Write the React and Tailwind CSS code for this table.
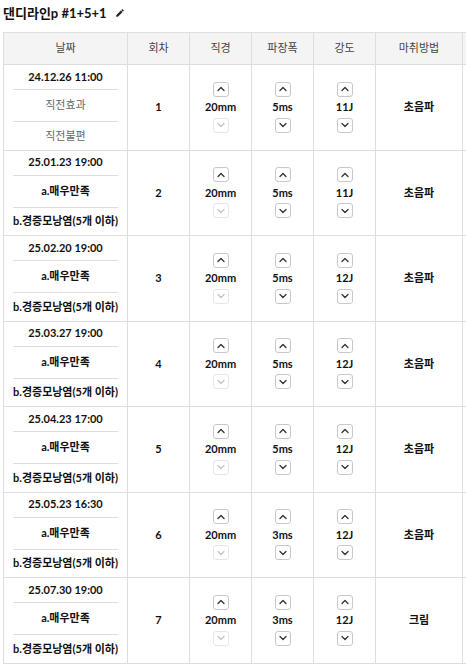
const ROWS = [
  { date: '24.12.26 11:00', a: '직전효과', b: '직전불편', muted: true, no: 1, size: '20mm', pulse: '5ms', power: '11J', method: '초음파' },
  { date: '25.01.23 19:00', a: 'a.매우만족', b: 'b.경증모낭염(5개 이하)', no: 2, size: '20mm', pulse: '5ms', power: '11J', method: '초음파' },
  { date: '25.02.20 19:00', a: 'a.매우만족', b: 'b.경증모낭염(5개 이하)', no: 3, size: '20mm', pulse: '5ms', power: '12J', method: '초음파' },
  { date: '25.03.27 19:00', a: 'a.매우만족', b: 'b.경증모낭염(5개 이하)', no: 4, size: '20mm', pulse: '5ms', power: '12J', method: '초음파' },
  { date: '25.04.23 17:00', a: 'a.매우만족', b: 'b.경증모낭염(5개 이하)', no: 5, size: '20mm', pulse: '5ms', power: '12J', method: '초음파' },
  { date: '25.05.23 16:30', a: 'a.매우만족', b: 'b.경증모낭염(5개 이하)', no: 6, size: '20mm', pulse: '3ms', power: '12J', method: '초음파' },
  { date: '25.07.30 19:00', a: 'a.매우만족', b: 'b.경증모낭염(5개 이하)', no: 7, size: '20mm', pulse: '3ms', power: '12J', method: '크림' },
];

const FONT = { fontFamily: "Lato, 'Noto Sans CJK KR', sans-serif" };

function Chevron({ up, disabled }) {
  return (
    <svg width="8" height="6" viewBox="0 0 8 6" fill="none">
      <polyline
        points={up ? '1,4.5 4,1.5 7,4.5' : '1,1.5 4,4.5 7,1.5'}
        stroke={disabled ? '#c4c4c4' : '#333'}
        strokeWidth="1.3"
        strokeLinecap="round"
        strokeLinejoin="round"
      />
    </svg>
  );
}

function StepBtn({ up, disabled }) {
  return (
    <div
      className={`w-[16px] h-[15px] rounded-[3px] border bg-white flex items-center justify-center ${
        disabled ? 'border-[#e6e6e6]' : 'border-[#c8c8c8]'
      }`}
    >
      <Chevron up={up} disabled={disabled} />
    </div>
  );
}

function Stepper({ value, downDisabled }) {
  return (
    <div className="flex flex-col items-center">
      <StepBtn up />
      <div className="h-[21px] flex items-center text-[11px] font-bold text-[#111]">{value}</div>
      <StepBtn disabled={downDisabled} />
    </div>
  );
}

export default function App() {
  return (
    <div className="w-[466px] h-[664px] overflow-hidden bg-white text-[#111]" style={FONT}>
      {/* Title */}
      <div className="h-[32px] pl-[3px] flex items-start pt-[4px] gap-[8px]">
        <span className="text-[13px] font-bold leading-[18px]">댄디라인p #1+5+1</span>
        <svg width="10" height="10" viewBox="0 0 24 24" className="mt-[4px]">
          <path fill="#222" d="M3 17.25V21h3.75L17.81 9.94l-3.75-3.75L3 17.25zM20.71 7.04a1 1 0 0 0 0-1.41l-2.34-2.34a1 1 0 0 0-1.41 0l-1.83 1.83 3.75 3.75 1.83-1.83z" />
        </svg>
      </div>

      <div className="pl-[3px]">
        <table className="table-fixed border-collapse w-[550px]">
          <colgroup>
            <col className="w-[124px]" />
            <col className="w-[62px]" />
            <col className="w-[62px]" />
            <col className="w-[62px]" />
            <col className="w-[62px]" />
            <col className="w-[87px]" />
            <col className="w-[91px]" />
          </colgroup>
          <thead>
            <tr className="h-[32px] bg-[#f4f4f4]">
              {['날짜', '회차', '직경', '파장폭', '강도', '마취방법', ''].map((h, i) => (
                <th key={i} className="border border-[#dedede] text-[11px] font-normal text-[#444] p-0">
                  {h}
                </th>
              ))}
            </tr>
          </thead>
          <tbody>
            {ROWS.map((r) => (
              <tr key={r.no}>
                <td className="border border-[#dedede] p-0 px-[9px]">
                  <div className="h-[25px] flex items-center justify-center text-[11px] font-bold border-b border-[#dedede]">
                    {r.date}
                  </div>
                  <div
                    className={`h-[32px] flex items-center justify-center text-[11px] border-b border-[#dedede] ${
                      r.muted ? 'text-[#666] font-normal' : 'font-bold'
                    }`}
                  >
                    {r.a}
                  </div>
                  <div
                    className={`h-[27.5px] flex items-center justify-center text-[11px] whitespace-nowrap ${
                      r.muted ? 'text-[#666] font-normal' : 'font-bold'
                    }`}
                  >
                    {r.b}
                  </div>
                </td>
                <td className="border border-[#dedede] text-center text-[11px] font-bold p-0">{r.no}</td>
                <td className="border border-[#dedede] p-0">
                  <Stepper value={r.size} downDisabled />
                </td>
                <td className="border border-[#dedede] p-0">
                  <Stepper value={r.pulse} />
                </td>
                <td className="border border-[#dedede] p-0">
                  <Stepper value={r.power} />
                </td>
                <td className="border border-[#dedede] text-center text-[11px] font-bold p-0">{r.method}</td>
                <td className="border border-[#dedede] p-0"></td>
              </tr>
            ))}
          </tbody>
        </table>
      </div>
    </div>
  );
}
